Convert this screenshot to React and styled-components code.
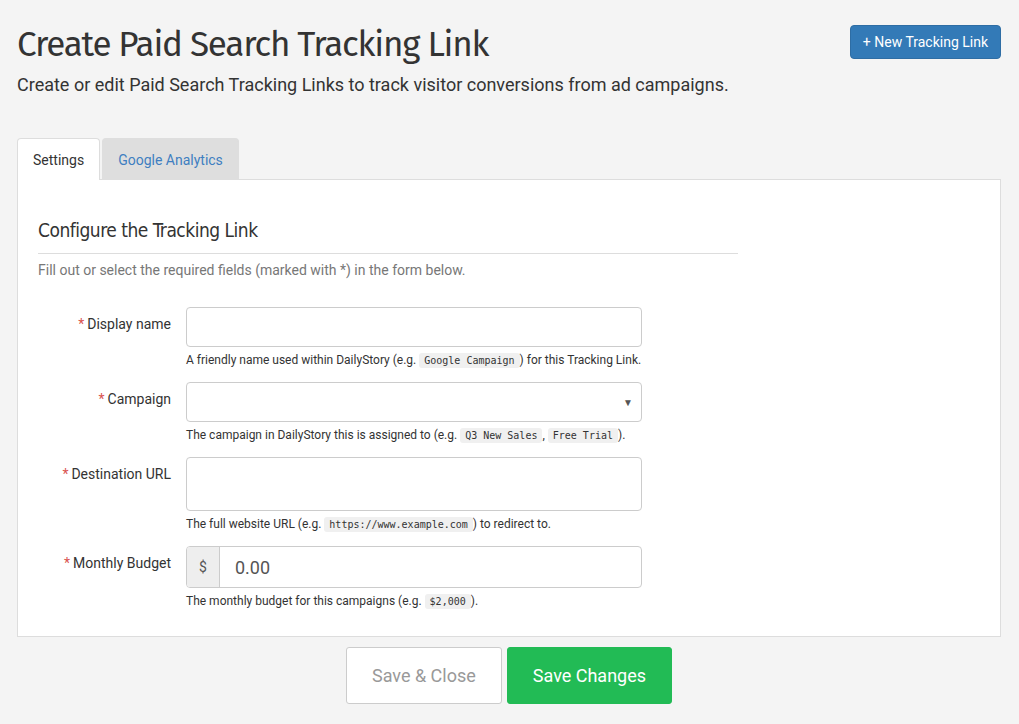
import React from 'react';
import styled, { createGlobalStyle } from 'styled-components';

const GlobalStyle = createGlobalStyle`
  html, body {
    margin: 0;
    padding: 0;
    background: #f4f4f4;
    font-family: Roboto, "Liberation Sans", sans-serif;
    color: #333;
  }
`;

const Page = styled.div`
  padding: 22px 18px 20px 17px;
`;

const Header = styled.div`
  display: flex;
  justify-content: space-between;
  align-items: flex-start;
`;

const Title = styled.h1`
  margin: 0;
  font-family: "Fira Sans", "Noto Sans", "Open Sans", sans-serif;
  font-weight: 400;
  font-size: 35px;
  letter-spacing: -1.2px;
  line-height: 44px;
  color: #333;
`;

const Lead = styled.p`
  margin: 7px 0 0;
  font-size: 18px;
  line-height: 24px;
  color: #333;
`;

const PrimaryButton = styled.button`
  margin-top: 3px;
  background: #337ab7;
  border: 1px solid #2e6da4;
  border-radius: 4px;
  color: #fff;
  font-family: Roboto, sans-serif;
  font-size: 14px;
  height: 34px;
  padding: 0 12px;
`;

const Tabs = styled.div`
  display: flex;
  gap: 2px;
  margin-top: 40px;
`;

const Tab = styled.div`
  height: 42px;
  box-sizing: border-box;
  padding: 0 15px;
  display: flex;
  align-items: center;
  font-size: 14px;
  border-radius: 4px 4px 0 0;
  border: 1px solid ${p => (p.$active ? '#ddd' : '#dedede')};
  border-bottom: none;
  background: ${p => (p.$active ? '#fff' : '#dedede')};
  color: ${p => (p.$active ? '#333' : '#3f7ec1')};
  position: relative;
  top: 1px;
`;

const Panel = styled.div`
  background: #fff;
  border: 1px solid #ddd;
  padding: 38px 20px 13px;
`;

const Section = styled.div`
  width: 700px;
`;

const SectionTitle = styled.h3`
  margin: 0;
  padding-bottom: 11px;
  border-bottom: 1px solid #ddd;
  font-family: "DejaVu Sans Condensed", "Fira Sans", sans-serif;
  font-weight: 400;
  font-size: 19px;
  letter-spacing: -0.5px;
  line-height: 24px;
  color: #333;
`;

const Intro = styled.p`
  margin: 8px 0 29px;
  font-size: 14px;
  color: #777;
`;

const Row = styled.div`
  display: grid;
  grid-template-columns: 133px 456px;
  column-gap: 15px;
  margin-bottom: 13px;
`;

const Label = styled.label`
  text-align: right;
  padding-top: 9px;
  font-size: 14px;
  color: #333;
`;

const Star = styled.span`
  color: #d9534f;
  margin-right: 3px;
`;

const Input = styled.div`
  height: ${p => p.$h || 40}px;
  box-sizing: border-box;
  border: 1px solid #ccc;
  border-radius: 4px;
  background: #fff;
  display: flex;
  align-items: center;
  justify-content: flex-end;
  padding: 0 8px;
  font-size: 10px;
  color: #555;
`;

const InputGroup = styled.div`
  display: flex;
  height: 40px;
  border: 1px solid #ccc;
  border-radius: 4px;
  overflow: hidden;
`;

const Addon = styled.span`
  width: 32px;
  background: #eee;
  border-right: 1px solid #ccc;
  display: flex;
  align-items: center;
  justify-content: center;
  font-size: 14px;
  color: #555;
`;

const Value = styled.span`
  display: flex;
  align-items: center;
  padding-left: 15px;
  font-size: 18px;
  color: #555;
`;

const Help = styled.div`
  margin-top: 5px;
  font-size: 12px;
  line-height: 16px;
  color: #333;
`;

const Code = styled.code`
  font-family: "DejaVu Sans Mono", "Liberation Mono", monospace;
  font-size: 10px;
  background: #f0f0f0;
  border-radius: 3px;
  padding: 2px 5px;
`;

const Actions = styled.div`
  display: flex;
  justify-content: center;
  gap: 5px;
  margin-top: 10px;
`;

const ActionButton = styled.button`
  height: 57px;
  padding: 0 25px;
  border-radius: 3px;
  font-family: Roboto, sans-serif;
  font-size: 18px;
  border: 1px solid ${p => (p.$primary ? '#22bb55' : '#ccc')};
  background: ${p => (p.$primary ? '#22bb55' : '#fff')};
  color: ${p => (p.$primary ? '#fff' : '#999')};
`;

function Field({ label, children, help }) {
  return (
    <Row>
      <Label>
        <Star>*</Star>
        {label}
      </Label>
      <div>
        {children}
        <Help>{help}</Help>
      </div>
    </Row>
  );
}

export default function App() {
  return (
    <Page>
      <GlobalStyle />
      <Header>
        <div>
          <Title>Create Paid Search Tracking Link</Title>
          <Lead>Create or edit Paid Search Tracking Links to track visitor conversions from ad campaigns.</Lead>
        </div>
        <PrimaryButton>+ New Tracking Link</PrimaryButton>
      </Header>

      <Tabs>
        <Tab $active>Settings</Tab>
        <Tab>Google Analytics</Tab>
      </Tabs>
      <Panel>
        <Section>
          <SectionTitle>Configure the Tracking Link</SectionTitle>
          <Intro>Fill out or select the required fields (marked with *) in the form below.</Intro>
        </Section>

        <Field
          label="Display name"
          help={<>A friendly name used within DailyStory (e.g. <Code>Google Campaign</Code>) for this Tracking Link.</>}
        >
          <Input />
        </Field>
        <Field
          label="Campaign"
          help={<>The campaign in DailyStory this is assigned to (e.g. <Code>Q3 New Sales</Code>, <Code>Free Trial</Code>).</>}
        >
          <Input>▼</Input>
        </Field>
        <Field
          label="Destination URL"
          help={<>The full website URL (e.g. <Code>https://www.example.com</Code>) to redirect to.</>}
        >
          <Input $h={54} />
        </Field>
        <Field
          label="Monthly Budget"
          help={<>The monthly budget for this campaigns (e.g. <Code>$2,000</Code>).</>}
        >
          <InputGroup>
            <Addon>$</Addon>
            <Value>0.00</Value>
          </InputGroup>
        </Field>
      </Panel>

      <Actions>
        <ActionButton>Save &amp; Close</ActionButton>
        <ActionButton $primary>Save Changes</ActionButton>
      </Actions>
    </Page>
  );
}
